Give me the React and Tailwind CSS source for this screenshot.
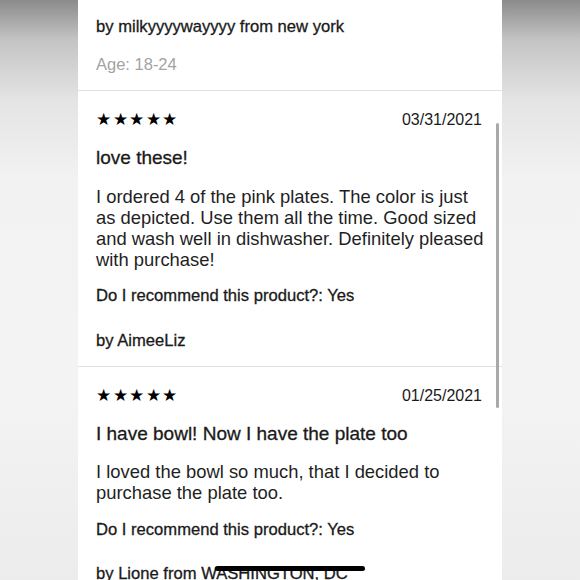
const reviews = [
  {
    date: '03/31/2021',
    title: 'love these!',
    body: 'I ordered 4 of the pink plates. The color is just as depicted. Use them all the time. Good sized and wash well in dishwasher. Definitely pleased with purchase!',
    author: 'by AimeeLiz',
  },
  {
    date: '01/25/2021',
    title: 'I have bowl! Now I have the plate too',
    body: 'I loved the bowl so much, that I decided to purchase the plate too.',
    author: 'by Lione from WASHINGTON, DC',
  },
];

const medium = '[-webkit-text-stroke:0.3px_#1a1a1a]';

const Stars = () => (
  <div className="flex gap-[2px] text-[17px] leading-[22px] text-black">
    {[0, 1, 2, 3, 4].map((i) => (
      <span key={i} className="w-[14.5px]">★</span>
    ))}
  </div>
);

const Review = ({ review }) => (
  <div className="border-b border-[#e2e2e2] pt-[18px] pb-[14px] pl-[18px] pr-[18px]">
    <div className="flex items-center justify-between">
      <Stars />
      <span className="mr-[2px] text-[16px] leading-[22px] text-[#1a1a1a]">{review.date}</span>
    </div>
    <h3 className={`mt-4 text-[19px] leading-[22px] text-[#1a1a1a] ${medium}`}>{review.title}</h3>
    <p className="mt-[16.5px] text-[18.4px] leading-[21px] text-[#1f1f1f]">{review.body}</p>
    <p className={`mt-[15.5px] text-[16.6px] leading-[22px] text-[#1a1a1a] ${medium}`}>
      Do I recommend this product?: Yes
    </p>
    <p className={`mt-[22.5px] text-[16.6px] leading-[22px] text-[#1a1a1a] ${medium}`}>{review.author}</p>
  </div>
);

export default function App() {
  return (
    <div
      className="relative h-[580px] w-[580px] overflow-hidden bg-[linear-gradient(180deg,#8b8b8b_0px,#c4c4c4_40px,#e4e4e4_100px,#f2f2f2_180px,#f3f3f3_400px,#ececec_580px)]"
      style={{ fontFamily: '"Liberation Sans", Arial, sans-serif' }}
    >
      <div className="mx-auto flex h-full w-[424px] flex-col bg-white">
        <div className="border-b border-[#e2e2e2] pt-4 pb-[15px] pl-[18px] pr-[20px]">
          <p className={`text-[16.6px] leading-[22px] text-[#1a1a1a] ${medium}`}>
            by milkyyyywayyyy from new york
          </p>
          <p className="mt-[15px] text-[16.5px] leading-[22px] text-[#a3a3a3]">Age: 18-24</p>
        </div>
        {reviews.map((r) => (
          <Review key={r.date} review={r} />
        ))}
      </div>

      {/* scroll indicator */}
      <div className="absolute left-[496px] top-[123px] h-[285px] w-[3px] rounded-full bg-[#a9a9a9]" />
      {/* home indicator */}
      <div className="absolute left-[215px] top-[566px] h-[5px] w-[150px] rounded-full bg-black" />
    </div>
  );
}
